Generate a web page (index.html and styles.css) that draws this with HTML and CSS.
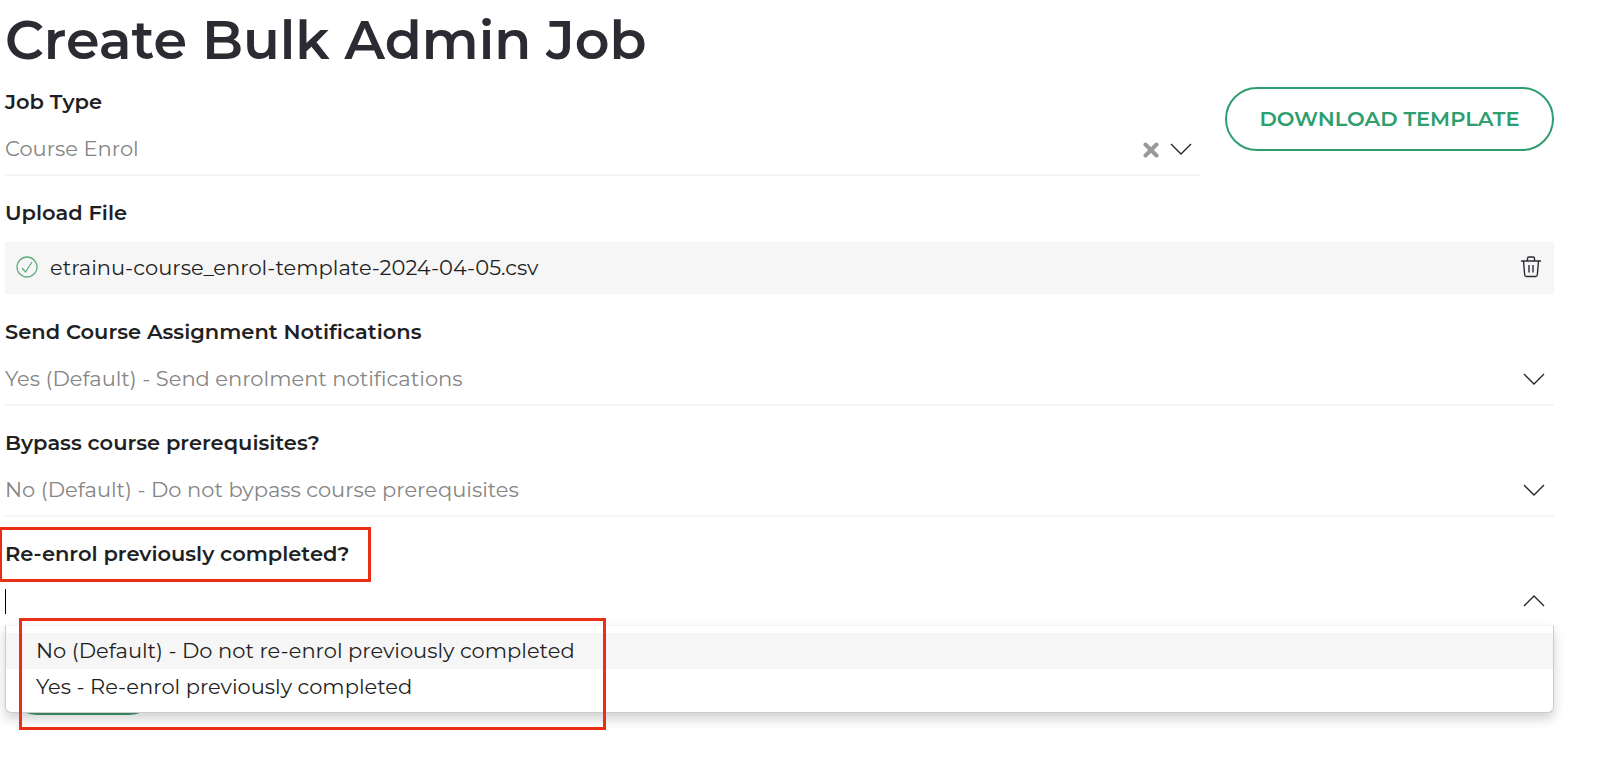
FILE: index.html
```
<!DOCTYPE html>
<html lang="en">
<head>
    <meta charset="UTF-8">
    <meta name="viewport" content="width=device-width, initial-scale=1.0">
    <title>Create Bulk Admin Job</title>
    <link rel="stylesheet" href="styles.css">
</head>
<body>
    <h1>Create Bulk Admin Job</h1>

    <form class="job-form">
        <div class="job-row">
            <div class="field">
                <label for="jobType">Job Type</label>
                <div class="control">
                    <select id="jobType" name="jobType">
                        <option>Course Enrol</option>
                    </select>
                    <button type="button" class="icon-button" aria-label="Clear job type">
                        <svg class="clear" width="16" height="18" viewBox="0 0 16 18"><path d="M2.5 4.5l11 11M13.5 4.5l-11 11"/></svg>
                    </button>
                    <svg class="chevron" width="22" height="12" viewBox="0 0 22 12"><path d="M1 1l10 10L21 1"/></svg>
                </div>
            </div>
            <button type="button" class="download">DOWNLOAD TEMPLATE</button>
        </div>

        <div class="field upload">
            <h2>Upload File</h2>
            <div class="file">
                <svg class="check" width="22" height="24" viewBox="0 0 22 24"><circle cx="11" cy="11" r="10"/><path d="M6 12l3.5 4L16 6"/></svg>
                <span class="file-name">etrainu-course_enrol-template-2024-04-05.csv</span>
                <button type="button" class="icon-button" aria-label="Remove file">
                    <svg class="trash" width="22" height="24" viewBox="0 0 22 24"><path d="M1 5h20M7.5 5V2.500A1.500 1.500 0 0 1 9 1h4a1.500 1.500 0 0 1 1.500 1.500V5M3.500 5l1.200 14a1.800 1.800 0 0 0 1.800 1.500h9a1.800 1.800 0 0 0 1.800-1.500L18.500 5M9 9v7.500M13 9v7.500"/></svg>
                </button>
            </div>
        </div>

        <div class="field">
            <label for="notifications">Send Course Assignment Notifications</label>
            <div class="control">
                <select id="notifications" name="notifications">
                    <option>Yes (Default) - Send enrolment notifications</option>
                </select>
                <svg class="chevron" width="22" height="12" viewBox="0 0 22 12"><path d="M1 1l10 10L21 1"/></svg>
            </div>
        </div>

        <div class="field">
            <label for="bypass">Bypass course prerequisites?</label>
            <div class="control">
                <select id="bypass" name="bypass">
                    <option>No (Default) - Do not bypass course prerequisites</option>
                </select>
                <svg class="chevron" width="22" height="12" viewBox="0 0 22 12"><path d="M1 1l10 10L21 1"/></svg>
            </div>
        </div>

        <div class="field">
            <label for="reenrol" class="marked">Re-enrol previously completed?</label>
            <div class="control open">
                <input type="text" id="reenrol" name="reenrol" role="combobox" aria-expanded="true" aria-controls="reenrolMenu" autocomplete="off">
                <svg class="chevron" width="22" height="12" viewBox="0 0 22 12"><path d="M1 11L11 1l10 10"/></svg>
                <ul class="menu" id="reenrolMenu" role="listbox">
                    <li class="active" role="option" aria-selected="true">No (Default) - Do not re-enrol previously completed</li>
                    <li role="option" aria-selected="false">Yes - Re-enrol previously completed</li>
                </ul>
            </div>
        </div>

        <button type="submit" class="submit" aria-label="Submit"></button>
    </form>
</body>
</html>
```
FILE: styles.css
```
*, *::before, *::after {
    box-sizing: border-box;
}
body {
    margin: 0;
    min-height: 100vh;
    padding: 4px 46px 0 5px;
    font-family: Montserrat, Inter, sans-serif;
    font-size: 21px;
    line-height: 28px;
    color: #1f1f24;
    background: #fff;
}
h1 {
    margin: 0 0 11px;
    font-size: 54px;
    line-height: 72px;
    font-weight: 600;
    color: #2b2b33;
}
h2, label {
    display: block;
    width: fit-content;
    margin: 0 0 8px;
    font-size: 21px;
    line-height: 28px;
    font-weight: 600;
}
button, select, input {
    font: inherit;
    margin: 0;
    padding: 0;
    border: 0;
    background: none;
}
svg {
    display: block;
    fill: none;
    flex: none;
}
.job-form {
    display: flex;
    flex-direction: column;
    gap: 23px;
}
.job-row {
    display: flex;
    align-items: flex-start;
    gap: 24px;
}
.job-row .field {
    flex: 1;
    padding-top: 1px;
}
.control {
    position: relative;
    display: flex;
    align-items: center;
    gap: 11px;
    height: 52px;
    padding-right: 9px;
    border-bottom: 2px solid #f5f5f5;
}
.control select, .control input {
    flex: 1;
    min-width: 0;
    height: 50px;
    appearance: none;
    outline: 0;
    color: #858585;
}
.chevron {
    stroke: #222;
    stroke-width: 1.3;
}
.clear {
    stroke: #999;
    stroke-width: 4;
    stroke-linecap: round;
}
.download {
    min-width: 329px;
    height: 64px;
    padding: 0 32px;
    border: 2px solid #2f9e6e;
    border-radius: 32px;
    font-size: 21px;
    font-weight: 600;
    color: #2f9e6e;
}
.upload {
    padding-bottom: 1px;
}
.upload h2 {
    margin-bottom: 15px;
}
.file {
    display: flex;
    align-items: center;
    gap: 12px;
    height: 52px;
    padding: 0 12px 0 11px;
    background: #f6f6f6;
}
.file-name {
    flex: 1;
}
.check {
    stroke: #5fae7f;
    stroke-width: 1.3;
}
.trash {
    stroke: #2b2b33;
    stroke-width: 1.4;
}

/* open dropdown */
.open::before {
    content: "";
    position: absolute;
    left: 0;
    top: 13px;
    width: 1px;
    height: 25px;
    background: #000;
}
.control input {
    caret-color: transparent;
}
.menu {
    position: absolute;
    z-index: 1;
    top: 49px;
    left: 0;
    right: 0;
    margin: 0;
    padding: 7px 0;
    list-style: none;
    background: #fff;
    border: 1px solid #ccc;
    border-top-color: #f5f5f5;
    border-radius: 0 0 6px 6px;
    box-shadow: 0 6px 12px rgba(0, 0, 0, 0.18);
}
.menu li {
    height: 36px;
    padding: 0 30px;
    line-height: 36px;
}
.menu .active {
    background: #f6f6f6;
}
.submit {
    width: 156px;
    height: 64px;
    border-radius: 32px;
    background: #3f9a6b;
}

/* red highlight boxes */
.marked {
    position: relative;
}
.marked::after, .menu::after {
    content: "";
    position: absolute;
    border: 3px solid #ea2f16;
    pointer-events: none;
}
.marked::after {
    inset: -13px -21px -14px -6px;
}
.menu::after {
    left: 13px;
    top: -8px;
    width: 587px;
    height: 112px;
}
```
